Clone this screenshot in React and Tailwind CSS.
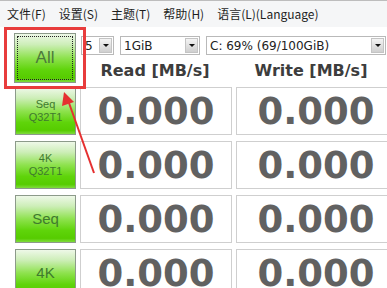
import React from "react";

const menus = ["文件(F)", "设置(S)", "主题(T)", "帮助(H)", "语言(L)(Language)"];

const rows = [
  { lines: ["Seq", "Q32T1"] },
  { lines: ["4K", "Q32T1"] },
  { lines: ["Seq"], big: true },
  { lines: ["4K"], big: true },
];

const green =
  "bg-[linear-gradient(to_bottom,#eef8e8_0%,#cdeeb8_22%,#8ee24e_50%,#5fd40a_75%,#56cc00_92%,#7fdc3c_100%)] border border-[#8c9a8a]";

const Combo = ({ text, width }) => (
  <div
    className="flex items-center h-[19px] border border-[#b9b9b9] bg-white"
    style={{ width }}
  >
    <span className="flex-1 pl-[3px] text-[12px] leading-none text-[#222] truncate">
      {text}
    </span>
    <span className="w-[13px] h-[15px] mr-[1px] flex items-center justify-center border border-[#c4c4c4] bg-[linear-gradient(to_bottom,#f4f4f4,#cfcfcf)]">
      <span className="w-0 h-0 border-l-[3px] border-r-[3px] border-t-[3px] border-l-transparent border-r-transparent border-t-[#111]" />
    </span>
  </div>
);

const Cell = ({ w }) => (
  <div
    className="h-full flex items-center justify-center border border-[#cfcfcf] bg-white shrink-0"
    style={{ width: w }}
  >
    <span className="font-['DejaVu_Sans',sans-serif] font-bold text-[37px] leading-none text-[#616161]">
      0.000
    </span>
  </div>
);

export default function App() {
  return (
    <div className="relative w-[387px] h-[288px] overflow-hidden bg-white font-['DejaVu_Sans',sans-serif]">
      <div className="h-[27px] flex items-center gap-[13px] pl-[7px] border-t border-[#bdbdbd] bg-[#f5f6f7] font-['Noto_Sans_CJK_SC','Noto_Sans',sans-serif] text-[12px] text-[#1e1e1e]">
        {menus.map((m) => (
          <span key={m}>{m}</span>
        ))}
      </div>

      <div className="pl-[14px] pt-[6px]">
        <div className="flex h-[54px]">
          <div
            className={`relative w-[63px] h-[50px] flex items-center justify-center ${green}`}
          >
            <div className="absolute inset-[2px] border border-dotted border-[#222]" />
            <span className="text-[17px] text-[#4c7a3c] font-['Liberation_Sans',sans-serif]">
              All
            </span>
          </div>
          <div className="ml-[3px] flex flex-col">
            <div className="flex gap-[6px] pl-[2px] mt-[3px]">
              <Combo text="5" width={33} />
              <Combo text="1GiB" width={80} />
              <Combo text="C: 69% (69/100GiB)" width={180} />
            </div>
            <div className="flex h-[32px] items-center text-[16px] font-bold text-[#3d3d3d]">
              <div className="w-[152px] text-center">Read [MB/s]</div>
              <div className="w-[152px] ml-[4px] text-center">Write [MB/s]</div>
            </div>
          </div>
        </div>

        <div className="flex flex-col gap-[6px]">
          {rows.map((r, i) => (
            <div key={i} className="flex h-[48px]">
              <div
                className={`ml-[1px] w-[61px] h-full flex flex-col items-center justify-center shrink-0 ${green} font-['Liberation_Sans',sans-serif] text-[#3f7a2e]`}
              >
                {r.lines.map((l) => (
                  <span
                    key={l}
                    className={r.big ? "text-[15px] leading-[16px]" : "text-[11px] leading-[13px]"}
                  >
                    {l}
                  </span>
                ))}
              </div>
              <div className="ml-[4px] h-full">
                <Cell w={152} />
              </div>
              <div className="ml-[4px] h-full">
                <Cell w={160} />
              </div>
            </div>
          ))}
        </div>
      </div>

      <div className="absolute left-[4px] top-[27px] w-[82px] h-[62px] border-[3px] border-[#e83c3c]" />

      <svg className="absolute left-0 top-0" width="387" height="288">
        <line x1="94" y1="173" x2="69" y2="103" stroke="#e53030" strokeWidth="2" />
        <polygon points="64,92 62,106 74,102" fill="#e53030" />
      </svg>
    </div>
  );
}
